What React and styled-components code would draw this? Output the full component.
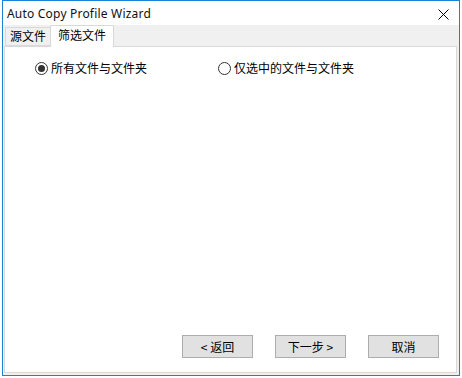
import React from 'react';
import styled, { createGlobalStyle } from 'styled-components';

const GlobalStyle = createGlobalStyle`
  html, body {
    margin: 0;
    padding: 0;
    background: #ffffff;
  }
  body {
    font-family: "Noto Sans", "Noto Sans CJK SC", sans-serif;
    font-size: 12px;
    color: #000;
  }
`;

// 마법사 창
const App = () => {
  const [choice, setChoice] = React.useState('all');
  const [tab, setTab] = React.useState(1);

  return (
    <>
      <GlobalStyle />
      <Window>
        <TitleBar>
          <Title>Auto Copy Profile Wizard</Title>
          <CloseButton>
            <svg width="11" height="11" viewBox="0 0 11 11">
              <path d="M0.5 0.5 L10.5 10.5 M10.5 0.5 L0.5 10.5" stroke="#000" strokeWidth="1" fill="none" />
            </svg>
          </CloseButton>
        </TitleBar>
        <Body>
          <TabStrip>
            <Tab active={tab === 0} onClick={() => setTab(0)}>源文件</Tab>
            <Tab active={tab === 1} onClick={() => setTab(1)}>筛选文件</Tab>
          </TabStrip>
          <Panel>
            <RadioRow>
              <RadioLabel width="183px" onClick={() => setChoice('all')}>
                <RadioCircle checked={choice === 'all'} />
                所有文件与文件夹
              </RadioLabel>
              <RadioLabel onClick={() => setChoice('selected')}>
                <RadioCircle checked={choice === 'selected'} />
                仅选中的文件与文件夹
              </RadioLabel>
            </RadioRow>
            <ButtonRow>
              <Button>&lt; 返回</Button>
              <Button>下一步 &gt;</Button>
              <Button>取消</Button>
            </ButtonRow>
          </Panel>
        </Body>
      </Window>
    </>
  );
};

const Window = styled.div`
  box-sizing: border-box;
  display: flex;
  flex-direction: column;
  margin-left: 2px;
  width: 458px;
  height: 376px;
  border: 1px solid #1883d7;
  background: #f0f0f0;
`;

const TitleBar = styled.div`
  display: flex;
  align-items: center;
  justify-content: space-between;
  height: 24px;
  background: #ffffff;
  padding: 0 10px 0 4px;
`;

const Title = styled.div`
  font-family: "Noto Sans", "Liberation Sans", sans-serif;
  font-size: 12px;
  font-weight: 400;
  letter-spacing: 0.2px;
  line-height: 14px;
  margin-top: 1px;
  color: #111;
`;

const CloseButton = styled.div`
  display: flex;
  align-items: center;
  margin-top: 3px;
`;

const Body = styled.div`
  flex: 1;
  display: flex;
  flex-direction: column;
  padding: 0 2px 2px 1px;
`;

const TabStrip = styled.div`
  display: flex;
  align-items: flex-end;
  height: 21px;
  padding-left: 1px;
  position: relative;
  z-index: 1;
`;

const Tab = styled.div`
  box-sizing: border-box;
  height: ${(props) => (props.active ? '22px' : '19px')};
  margin-bottom: ${(props) => (props.active ? '-1px' : '0')};
  padding: 0 ${(props) => (props.active ? '7px' : '4px')};
  background: ${(props) => (props.active ? '#ffffff' : '#f0f0f0')};
  border: 1px solid #d9d9d9;
  border-bottom: ${(props) => (props.active ? 'none' : '1px solid #d9d9d9')};
  margin-left: ${(props) => (props.active ? '-1px' : '0')};
  font-family: "Noto Sans CJK SC", sans-serif;
  font-size: 12px;
  line-height: ${(props) => (props.active ? '18px' : '16px')};
  cursor: default;
`;

const Panel = styled.div`
  flex: 1;
  display: flex;
  flex-direction: column;
  justify-content: space-between;
  background: #ffffff;
  border: 1px solid #d9d9d9;
  padding: 13px 17px 14px 30px;
`;

const RadioRow = styled.div`
  display: flex;
  align-items: center;
`;

const RadioLabel = styled.div`
  display: flex;
  align-items: center;
  gap: 3px;
  width: ${(props) => props.width || 'auto'};
  font-family: "Noto Sans CJK SC", sans-serif;
  font-size: 12px;
  line-height: 16px;
  cursor: default;
`;

const RadioCircle = styled.span`
  box-sizing: border-box;
  display: inline-block;
  position: relative;
  width: 13px;
  height: 13px;
  border-radius: 50%;
  border: 1px solid #333333;
  background: #ffffff;
  &::after {
    content: '';
    display: ${(props) => (props.checked ? 'block' : 'none')};
    position: absolute;
    left: 2px;
    top: 2px;
    width: 7px;
    height: 7px;
    border-radius: 50%;
    background: #333333;
  }
`;

const ButtonRow = styled.div`
  display: flex;
  justify-content: flex-end;
  gap: 22px;
`;

const Button = styled.button`
  box-sizing: border-box;
  width: 71px;
  height: 23px;
  padding: 0;
  background: #e1e1e1;
  border: 1px solid #adadad;
  font-family: "Noto Sans CJK SC", sans-serif;
  font-size: 12px;
  color: #000;
`;

export default App;
